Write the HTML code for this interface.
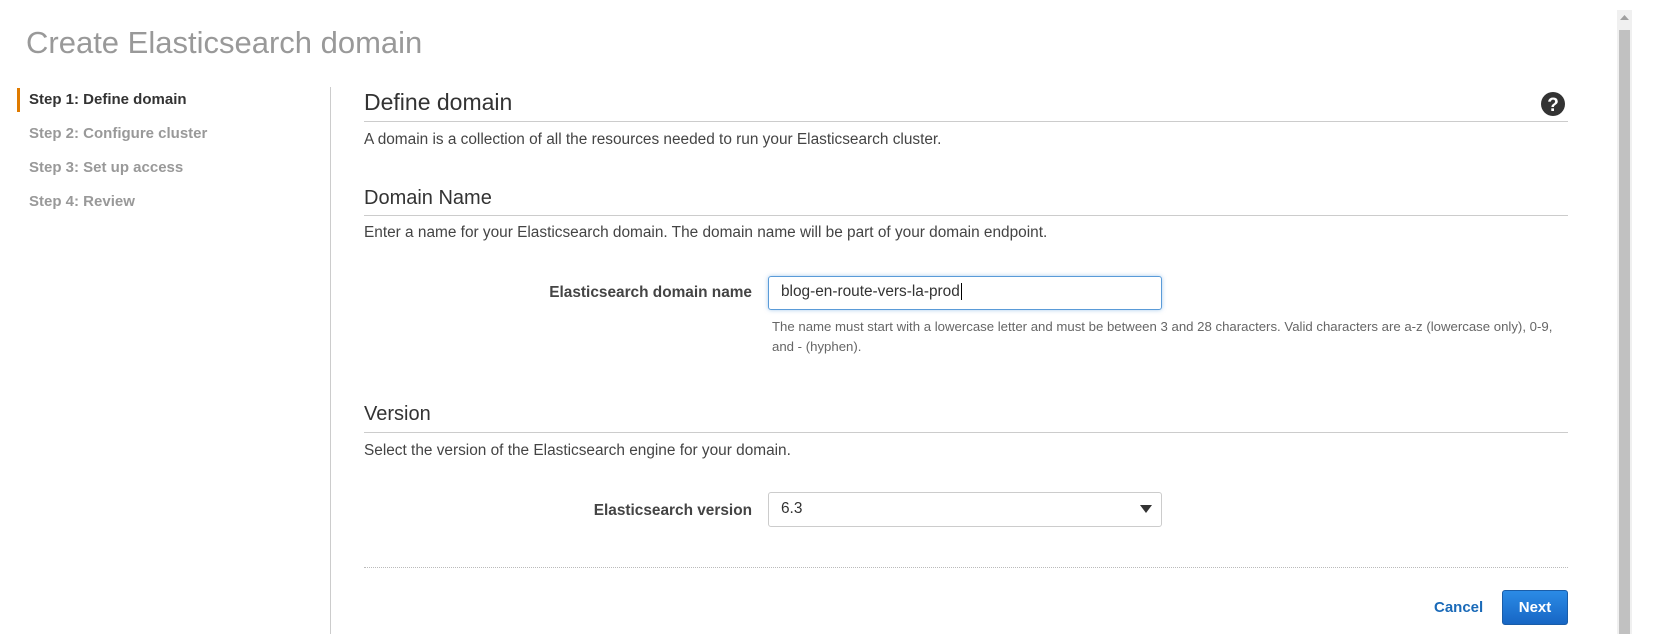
<!DOCTYPE html>
<html><head><meta charset="utf-8"><style>
body{margin:0;width:1674px;height:634px;background:#fff;font-family:"Liberation Sans",sans-serif;position:relative;overflow:hidden;color:#444}
.a{position:absolute;white-space:nowrap}
.title{left:26px;top:25px;font-size:31px;color:#999}
.step{left:29px;font-size:15px;font-weight:bold;color:#999;line-height:20px}
.h{font-size:23px;color:#333}
.h2{font-size:20px;color:#333}
.t{font-size:15.4px;color:#444}
.line{position:absolute;left:364px;width:1204px;height:1px;background:#ccc}
.lbl{font-size:15.4px;font-weight:bold;color:#444;text-align:right;right:922px}
</style></head><body>
<div class="a title">Create Elasticsearch domain</div>
<div class="a" style="left:17px;top:88px;width:3px;height:24px;background:#e07b00"></div>
<div class="a step" style="top:90px;color:#333">Step 1: Define domain</div>
<div class="a step" style="top:124px">Step 2: Configure cluster</div>
<div class="a step" style="top:158px">Step 3: Set up access</div>
<div class="a step" style="top:192px">Step 4: Review</div>
<div class="a" style="left:330px;top:87px;width:1px;height:547px;background:#ccc"></div>

<div class="a h" style="left:364px;top:89px">Define domain</div>
<svg class="a" style="left:1541px;top:92px" width="24" height="24" viewBox="0 0 24 24"><circle cx="12" cy="12" r="12" fill="#333"/><text x="12" y="19" text-anchor="middle" font-family="Liberation Sans" font-weight="bold" font-size="19" fill="#fff">?</text></svg>
<div class="line" style="top:121px"></div>
<div class="a t" style="left:364px;top:131px">A domain is a collection of all the resources needed to run your Elasticsearch cluster.</div>

<div class="a h2" style="left:364px;top:187px">Domain Name</div>
<div class="line" style="top:215px"></div>
<div class="a t" style="left:364px;top:224px">Enter a name for your Elasticsearch domain. The domain name will be part of your domain endpoint.</div>

<div class="a lbl" style="top:284px">Elasticsearch domain name</div>
<div class="a" style="left:768px;top:276px;width:392px;height:32px;border:1px solid #5a9bd8;border-radius:3px;box-shadow:0 0 4px rgba(80,150,220,.5)"></div>
<div class="a t" style="left:781px;top:283px;color:#333">blog-en-route-vers-la-prod<span style="border-left:1px solid #000;margin-left:1px"></span></div>
<div class="a" style="left:772px;top:317px;font-size:13.2px;color:#666;line-height:20px">The name must start with a lowercase letter and must be between 3 and 28 characters. Valid characters are a-z (lowercase only), 0-9,<br>and - (hyphen).</div>

<div class="a h2" style="left:364px;top:403px">Version</div>
<div class="line" style="top:432px"></div>
<div class="a t" style="left:364px;top:442px">Select the version of the Elasticsearch engine for your domain.</div>

<div class="a lbl" style="top:502px">Elasticsearch version</div>
<div class="a" style="left:768px;top:492px;width:392px;height:33px;border:1px solid #ccc;border-radius:3px"></div>
<div class="a t" style="left:781px;top:500px;color:#333">6.3</div>
<svg class="a" style="left:1140px;top:505px" width="12" height="8"><path d="M0 0H12L6 8Z" fill="#333"/></svg>

<div class="a" style="left:364px;top:567px;width:1204px;border-top:1px dotted #bbb"></div>
<div class="a" style="left:1434px;top:599px;font-size:15px;font-weight:bold;color:#1a6ab8">Cancel</div>
<div class="a" style="left:1502px;top:590px;width:64px;height:33px;border:1px solid #1a5da8;border-radius:3px;background:linear-gradient(#2b8be6,#1766c4);color:#fff;font-size:15px;font-weight:bold;text-align:center;line-height:33px">Next</div>

<div class="a" style="left:1617px;top:10px;width:15px;height:624px;background:#f0f0f0"></div>
<div class="a" style="left:1619px;top:30px;width:11px;height:604px;background:#c1c1c1"></div>
<svg class="a" style="left:1620px;top:15px" width="9" height="6"><path d="M0 5H9L4.5 0Z" fill="#a0a0a0"/></svg>
</body></html>
